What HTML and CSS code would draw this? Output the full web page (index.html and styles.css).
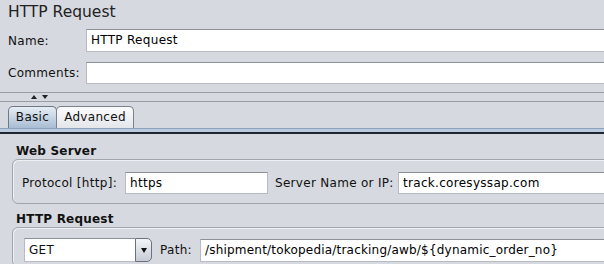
FILE: index.html
```html
<!DOCTYPE html>
<html lang="en">
<head>
  <meta charset="UTF-8">
  <title>HTTP Request</title>
  <link rel="stylesheet" href="styles.css">
</head>
<body>
  <div class="panel-title">HTTP Request</div>

  <div class="form-row name-row">
    <label class="row-label">Name:</label>
    <div class="field">HTTP Request</div>
  </div>
  <div class="form-row comments-row">
    <label class="row-label">Comments:</label>
    <div class="field"></div>
  </div>

  <div class="splitter">
    <span class="arrow up"></span>
    <span class="arrow down"></span>
  </div>

  <div class="tabs">
    <div class="tab selected">Basic</div>
    <div class="tab">Advanced</div>
  </div>
  <div class="tab-rule"></div>

  <div class="content">
    <div class="group-title">Web Server</div>
    <div class="group">
      <div class="group-row">
        <label class="lbl lbl-protocol">Protocol [http]:</label>
        <div class="field protocol">https</div>
        <label class="lbl lbl-server">Server Name or IP:</label>
        <div class="field grow">track.coresyssap.com</div>
      </div>
    </div>

    <div class="group-title second">HTTP Request</div>
    <div class="group req-group">
      <div class="group-row">
        <div class="combo">
          <div class="combo-value">GET</div>
          <div class="combo-btn"><span class="caret"></span></div>
        </div>
        <label class="lbl lbl-path">Path:</label>
        <div class="field grow path">/shipment/tokopedia/tracking/awb/${dynamic_order_no}</div>
      </div>
    </div>
  </div>
</body>
</html>
```

FILE: styles.css
```css
body {
  margin: 0; background: #d6d9df; overflow: hidden;
  font-family: "DejaVu Sans", sans-serif; font-size: 12px; color: #111;
  letter-spacing: 0.3px;
}
.panel-title { height: 29px; box-sizing: border-box; padding: 2px 8px 0; font-size: 15.5px; line-height: 20px; letter-spacing: 0; color: #222; }

.form-row { display: flex; align-items: center; padding-left: 8px; }
.name-row { height: 23px; }
.comments-row { height: 22px; margin-top: 10px; }
.row-label { width: 78px; flex: none; }

.field {
  box-sizing: border-box; height: 100%; background: #fff;
  border: 1px solid #b8bbc1; border-top-color: #8d9096;
  padding: 0 4px; line-height: 20px; color: #000;
  white-space: nowrap; overflow: hidden;
}
.form-row .field { flex: 1; margin-right: -10px; }

.splitter {
  margin-top: 8px; height: 8px; border-top: 1px solid #9a9da3; border-bottom: 1px solid #9a9da3;
  display: flex; align-items: center; gap: 5px; padding-left: 31px;
}
.arrow { width: 0; height: 0; border-left: 3px solid transparent; border-right: 3px solid transparent; }
.arrow.up { border-bottom: 4px solid #222; }
.arrow.down { border-top: 4px solid #222; }

.tabs { height: 26px; display: flex; align-items: flex-end; padding-left: 8px; }
.tab {
  height: 22px; box-sizing: border-box; line-height: 21px; text-align: center;
  border: 1px solid #7c808a; border-bottom: none; border-radius: 5px 5px 0 0;
  background: linear-gradient(#fbfbfc, #e4e6ea); width: 78px;
}
.tab + .tab { margin-left: -1px; }
.tab.selected { background: linear-gradient(#e6edf4, #a8bdd3); border-color: #6f7886; width: 49px; }

.tab-rule { height: 3px; border-top: 1px solid #8ea3bd; background: #b9cadf; border-bottom: 2px solid #1f2632; }

.content { padding-top: 10px; }
.group-title { font-weight: bold; line-height: 14px; padding-left: 16px; letter-spacing: 0.2px; }
.group-title.second { margin-top: 8px; }
.group {
  margin: 1px -20px 0 12px; border: 1px solid #a2a5ac; border-radius: 6px;
  box-shadow: inset 1px 1px 0 #eef0f3; padding: 12px 0 9px 9px;
}
.req-group { padding: 10px 0 0 11px; height: 40px; box-sizing: border-box; }
.group-row { display: flex; align-items: center; height: 22px; }
.req-group .group-row { height: 24px; }

.lbl { flex: none; }
.lbl-protocol { width: 103px; }
.protocol { width: 143px; flex: none; }
.lbl-server { width: 123px; margin-left: 7px; }
.grow { flex: 1; }
.lbl-path { width: 40px; margin-left: 8px; }
.path { height: 23px; margin-top: 1px; letter-spacing: 0.2px; }

.combo { display: flex; width: 128px; height: 24px; flex: none; }
.combo-value {
  flex: 1; background: #fff; border: 1px solid #b8bbc1; border-top-color: #8d9096; border-right: none;
  padding-left: 4px; line-height: 22px;
}
.combo-btn {
  width: 15px; border: 1px solid #6c727d; border-radius: 0 5px 5px 0;
  background: linear-gradient(#f3f5f8, #c6ccd6);
  display: flex; align-items: center; justify-content: center;
}
.caret { width: 0; height: 0; border-left: 3.5px solid transparent; border-right: 3.5px solid transparent; border-top: 5px solid #111; }
```
